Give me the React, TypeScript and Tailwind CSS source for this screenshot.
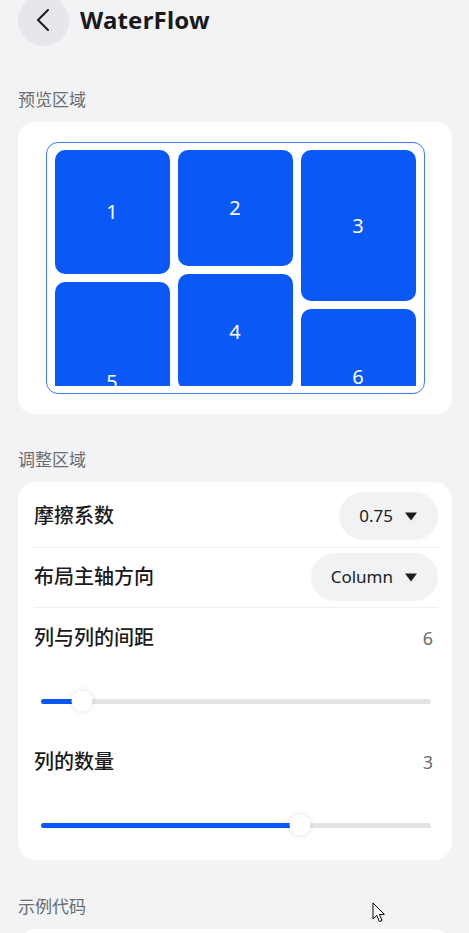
const FONT = { fontFamily: '"Noto Sans", "Noto Sans CJK SC", sans-serif' };

type Tile = { n: number; h: number };

const COLUMNS: Tile[][] = [
  [{ n: 1, h: 124 }, { n: 5, h: 200 }],
  [{ n: 2, h: 116 }, { n: 4, h: 116 }],
  [{ n: 3, h: 151 }, { n: 6, h: 136 }],
];

function SectionLabel({ text, top }: { text: string; top: string }) {
  return (
    <div className={`${top} mb-[11px] h-[22px] leading-[22px] text-[17px] text-[#6b6d70]`}>{text}</div>
  );
}

function Dropdown({ value }: { value: string }) {
  return (
    <div className="flex h-[48px] items-center gap-[12px] rounded-full bg-[#f1f2f3] pl-[20px] pr-[21px]">
      <span className="text-[17px] text-[#1c1c1c]">{value}</span>
      <svg width="12" height="9" viewBox="0 0 12 9">
        <path d="M0 0.5 H12 L6 8.5 Z" fill="#1c1c1c" />
      </svg>
    </div>
  );
}

function Slider({ pct }: { pct: number }) {
  return (
    <div className="relative mx-[7px] h-[5px] rounded-full bg-[#e4e4e4]">
      <div className="h-full rounded-full bg-[#0a59f7]" style={{ width: `${pct}%` }} />
      <div
        className="absolute top-1/2 h-[21px] w-[21px] -translate-x-1/2 -translate-y-1/2 rounded-full bg-white shadow-[0_0_6px_rgba(0,0,0,0.12)]"
        style={{ left: `${pct}%` }}
      />
    </div>
  );
}

export default function App() {
  return (
    <div className="relative min-h-screen bg-[#f1f3f5] pl-[18px] pr-[17px]" style={FONT}>
      {/* Header */}
      <div className="flex h-[40px] items-center gap-[11px]">
        <div className="flex h-[51px] w-[51px] items-center justify-center rounded-full bg-[#e5e7ea]">
          <svg width="14" height="22" viewBox="0 0 14 22" className="-ml-[2px]">
            <path d="M12 1 L2 11 L12 21" fill="none" stroke="#1c1c1c" strokeWidth="2" strokeLinecap="round" strokeLinejoin="round" />
          </svg>
        </div>
        <span className="text-[24px] font-bold tracking-[0.2px] text-[#1a1a1a]">WaterFlow</span>
      </div>

      <SectionLabel text="预览区域" top="mt-[49px]" />

      {/* Preview */}
      <div className="rounded-[16px] bg-white py-[20px]">
        <div className="mx-auto w-[379px] rounded-[12px] border border-[#3d7bf8] px-[8px] py-[7px]">
          <div className="flex h-[236px] gap-[8px] overflow-hidden">
            {COLUMNS.map((col, i) => (
              <div key={i} className="flex flex-1 flex-col gap-[8px]">
                {col.map((t) => (
                  <div
                    key={t.n}
                    className="flex shrink-0 items-center justify-center rounded-[10px] bg-[#0a59f7] text-[20px] text-white"
                    style={{ height: t.h }}
                  >
                    {t.n}
                  </div>
                ))}
              </div>
            ))}
          </div>
        </div>
      </div>

      <SectionLabel text="调整区域" top="mt-[35px]" />

      {/* Controls */}
      <div className="rounded-[18px] bg-white pl-[16px] pr-[14px] pt-[10px]">
        <div className="flex h-[48px] items-center justify-between">
          <span className="text-[20px] font-medium text-[#1a1a1a]">摩擦系数</span>
          <Dropdown value="0.75" />
        </div>
        <div className="mt-[7px] h-px bg-[#f0f0f0]" />
        <div className="mt-[5px] flex h-[48px] items-center justify-between">
          <span className="text-[20px] font-medium text-[#1a1a1a]">布局主轴方向</span>
          <Dropdown value="Column" />
        </div>
        <div className="mt-[6px] h-px bg-[#f0f0f0]" />

        <div className="flex h-[60px] items-center justify-between pr-[5px]">
          <span className="text-[20px] font-medium text-[#1a1a1a]">列与列的间距</span>
          <span className="text-[18px] text-[#6b6d70]">6</span>
        </div>
        <div className="flex h-[66px] flex-col justify-center">
          <Slider pct={10.5} />
        </div>

        <div className="flex h-[56px] items-center justify-between pr-[5px]">
          <span className="text-[20px] font-medium text-[#1a1a1a]">列的数量</span>
          <span className="text-[18px] text-[#6b6d70]">3</span>
        </div>
        <div className="flex h-[70px] flex-col justify-center">
          <Slider pct={66.4} />
        </div>
      </div>

      <SectionLabel text="示例代码" top="mt-[36px]" />

      <div className="h-[200px] rounded-[18px] bg-white" />

      {/* mouse pointer */}
      <svg className="absolute left-[372px] top-[902px]" width="14" height="22" viewBox="0 0 14 22">
        <path
          d="M1 1 L1 17 L4.8 13.4 L7.4 19.6 L10 18.5 L7.4 12.4 L12.4 12.4 Z"
          fill="white"
          stroke="black"
          strokeWidth="1"
        />
      </svg>
    </div>
  );
}
